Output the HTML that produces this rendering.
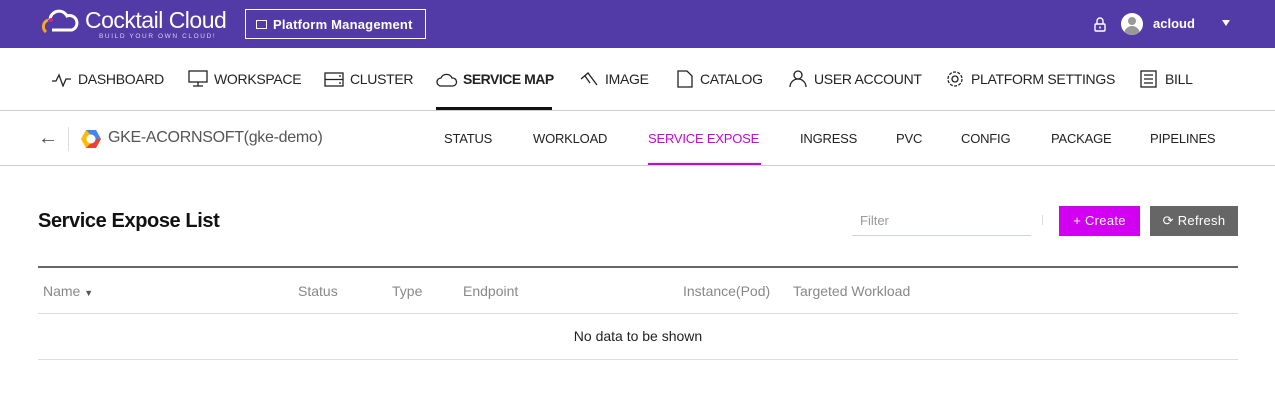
<!DOCTYPE html>
<html><head><meta charset="utf-8"><style>
*{box-sizing:border-box;margin:0;padding:0}
body{width:1275px;height:403px;background:#fff;font-family:"Liberation Sans","Noto Sans CJK KR",sans-serif;position:relative;overflow:hidden;color:#222}
.abs{position:absolute}
#top{left:0;top:0;width:1275px;height:48px;background:#523ba6}
.nav{top:71px;font-size:14px;color:#222;white-space:nowrap;letter-spacing:-0.3px}
.ic{top:70px}
.sub{top:131px;font-size:13px;color:#222;letter-spacing:-0.2px}
.th{top:283px;font-size:14px;color:#888}
svg{display:block}
</style></head><body>
<div id="top" class="abs">
 <svg class="abs" style="left:40px;top:8px" width="40" height="28" viewBox="0 0 40 28"><path d="M6 24a7 7 0 0 1 2-12" stroke="#f5a623" stroke-width="3" fill="none"/><path d="M10 12a9 9 0 0 1 17-4a7 7 0 0 1 5 14H12" stroke="#fff" stroke-width="3" fill="none"/><circle cx="11" cy="12" r="2" fill="#e0218a"/></svg>
 <div class="abs" style="left:85px;top:7px;color:#fff;font-size:23px;letter-spacing:-0.5px">Cocktail Cloud</div>
 <div class="abs" style="left:99px;top:33px;color:#d8d0f0;font-size:6.5px;letter-spacing:1.6px">BUILD YOUR OWN CLOUD!</div>
 <div class="abs" style="left:245px;top:9px;width:181px;height:30px;border:1px solid #fff;color:#fff;font-size:13px;font-weight:bold;padding:7px 0 0 10px;letter-spacing:0.2px"><span style="display:inline-block;width:11px;height:9px;border:1px solid #fff;margin-right:6px;vertical-align:0"></span>Platform Management</div>
 <svg class="abs" style="left:1094px;top:17px" width="12" height="15" viewBox="0 0 12 15"><path d="M3 7V4a3 3 0 0 1 6 0v3" stroke="#fff" fill="none" stroke-width="1.4"/><rect x="1" y="7" width="10" height="7" rx="1" stroke="#fff" fill="none" stroke-width="1.4"/><rect x="5.3" y="9.5" width="1.5" height="2" fill="#fff"/></svg>
 <div class="abs" style="left:1121px;top:13px;width:22px;height:22px;border-radius:50%;background:#fff;overflow:hidden"><div class="abs" style="left:7px;top:4px;width:8px;height:8px;border-radius:50%;background:#999"></div><div class="abs" style="left:3px;top:13px;width:16px;height:12px;border-radius:8px 8px 0 0;background:#999"></div></div>
 <div class="abs" style="left:1153px;top:16px;color:#fff;font-size:13px;font-weight:bold">acloud</div>
 <div class="abs" style="left:1222px;top:20px;border-left:4px solid transparent;border-right:4px solid transparent;border-top:6px solid #fff"></div>
</div>
<svg class="abs ic" style="left:52px;top:73px" width="20" height="14"><path d="M0 8h4l3-6 4 11 3-7h5" stroke="#222" fill="none" stroke-width="1.3"/></svg><div class="abs nav" style="left:78px">DASHBOARD</div>
<svg class="abs ic" style="left:188px" width="20" height="18"><rect x="1" y="1" width="18" height="11" stroke="#222" fill="none" stroke-width="1.3"/><path d="M10 12v4M5 16h10" stroke="#222" stroke-width="1.3"/></svg><div class="abs nav" style="left:214px">WORKSPACE</div>
<svg class="abs ic" style="left:324px;top:72px" width="20" height="16"><rect x="1" y="1" width="18" height="13" stroke="#222" fill="none" stroke-width="1.3"/><path d="M1 7.5h18M15 4h2M15 11h2" stroke="#222" stroke-width="1.3"/></svg><div class="abs nav" style="left:350px">CLUSTER</div>
<svg class="abs ic" style="left:436px;top:73px" width="22" height="14"><path d="M5 13a4 4 0 0 1 0-8a6 6 0 0 1 11 0a4 4 0 0 1 1 8z" stroke="#222" fill="none" stroke-width="1.3"/></svg><div class="abs nav" style="left:463px;font-weight:bold;letter-spacing:-0.5px">SERVICE MAP</div>
<div class="abs" style="left:436px;top:107px;width:116px;height:3px;background:#111"></div>
<svg class="abs ic" style="left:580px;top:71px" width="18" height="16"><path d="M1 8l7-6 9 12M5 5l5 7" stroke="#222" fill="none" stroke-width="1.3"/></svg><div class="abs nav" style="left:605px">IMAGE</div>
<svg class="abs ic" style="left:677px" width="16" height="18"><path d="M1 1h9l5 5v11H1z" stroke="#222" fill="none" stroke-width="1.3"/></svg><div class="abs nav" style="left:700px">CATALOG</div>
<svg class="abs ic" style="left:789px" width="18" height="18"><circle cx="9" cy="5" r="4" stroke="#222" fill="none" stroke-width="1.3"/><path d="M1 17a8 8 0 0 1 16 0" stroke="#222" fill="none" stroke-width="1.3"/></svg><div class="abs nav" style="left:814px">USER ACCOUNT</div>
<svg class="abs ic" style="left:946px" width="18" height="18"><circle cx="9" cy="9" r="3" stroke="#222" fill="none" stroke-width="1.3"/><circle cx="9" cy="9" r="7" stroke="#222" fill="none" stroke-width="1.3" stroke-dasharray="3 1.4"/></svg><div class="abs nav" style="left:971px">PLATFORM SETTINGS</div>
<svg class="abs ic" style="left:1140px" width="18" height="18"><rect x="1" y="1" width="15" height="16" stroke="#222" fill="none" stroke-width="1.3"/><path d="M4 5h9M4 9h9M4 13h9" stroke="#222" stroke-width="1.2"/></svg><div class="abs nav" style="left:1165px">BILL</div>
<div class="abs" style="left:0;top:110px;width:1275px;height:1px;background:#ccc"></div>
<div class="abs" style="left:38px;top:127px;font-size:20px;color:#555">←</div>
<div class="abs" style="left:68px;top:127px;width:1px;height:24px;background:#ddd"></div>
<svg class="abs" style="left:80px;top:128px" width="22" height="22" viewBox="0 0 22 22"><path d="M6 2h10l5 9-5 9H6L1 11z" fill="#fbbc05"/><path d="M6 2h10l5 9h-6z" fill="#4285f4"/><path d="M21 11l-5 9H6l9-9z" fill="#ea4335"/><circle cx="11" cy="11" r="4.5" fill="#fff"/></svg>
<div class="abs" style="left:108px;top:129px;font-size:16px;color:#555;letter-spacing:-0.3px">GKE-ACORNSOFT(gke-demo)</div>
<div class="abs sub" style="left:444px">STATUS</div>
<div class="abs sub" style="left:533px">WORKLOAD</div>
<div class="abs sub" style="left:648px;color:#d100e0">SERVICE EXPOSE</div>
<div class="abs" style="left:648px;top:163px;width:113px;height:2px;background:#d100e0"></div>
<div class="abs sub" style="left:800px">INGRESS</div>
<div class="abs sub" style="left:896px">PVC</div>
<div class="abs sub" style="left:961px">CONFIG</div>
<div class="abs sub" style="left:1051px">PACKAGE</div>
<div class="abs sub" style="left:1150px">PIPELINES</div>
<div class="abs" style="left:0;top:165px;width:1275px;height:1px;background:#ccc"></div>
<div class="abs" style="left:38px;top:210px;font-size:20px;font-weight:bold;color:#111;letter-spacing:-0.4px">Service Expose List</div>
<div class="abs" style="left:860px;top:213px;font-size:13px;color:#999">Filter</div>
<div class="abs" style="left:852px;top:235px;width:179px;height:1px;background:#cdd4e0"></div>
<div class="abs" style="left:1042px;top:215px;width:1px;height:10px;background:#ddd"></div>
<div class="abs" style="left:1059px;top:206px;width:81px;height:30px;background:#d100f0;color:#fff;font-size:13px;padding-top:7px;text-align:center;letter-spacing:0.3px">+ Create</div>
<div class="abs" style="left:1150px;top:206px;width:88px;height:30px;background:#666;color:#fff;font-size:13px;padding-top:7px;text-align:center;letter-spacing:0.3px">⟳ Refresh</div>
<div class="abs" style="left:38px;top:266px;width:1200px;height:2px;background:#666"></div>
<div class="abs th" style="left:43px">Name <span style="font-size:9px;color:#555">▼</span></div>
<div class="abs th" style="left:298px">Status</div>
<div class="abs th" style="left:392px">Type</div>
<div class="abs th" style="left:463px">Endpoint</div>
<div class="abs th" style="left:683px">Instance(Pod)</div>
<div class="abs th" style="left:793px">Targeted Workload</div>
<div class="abs" style="left:38px;top:313px;width:1200px;height:1px;background:#ddd"></div>
<div class="abs" style="left:38px;top:328px;width:1200px;text-align:center;font-size:14px;color:#222">No data to be shown</div>
<div class="abs" style="left:38px;top:359px;width:1200px;height:1px;background:#ddd"></div>
</body></html>
